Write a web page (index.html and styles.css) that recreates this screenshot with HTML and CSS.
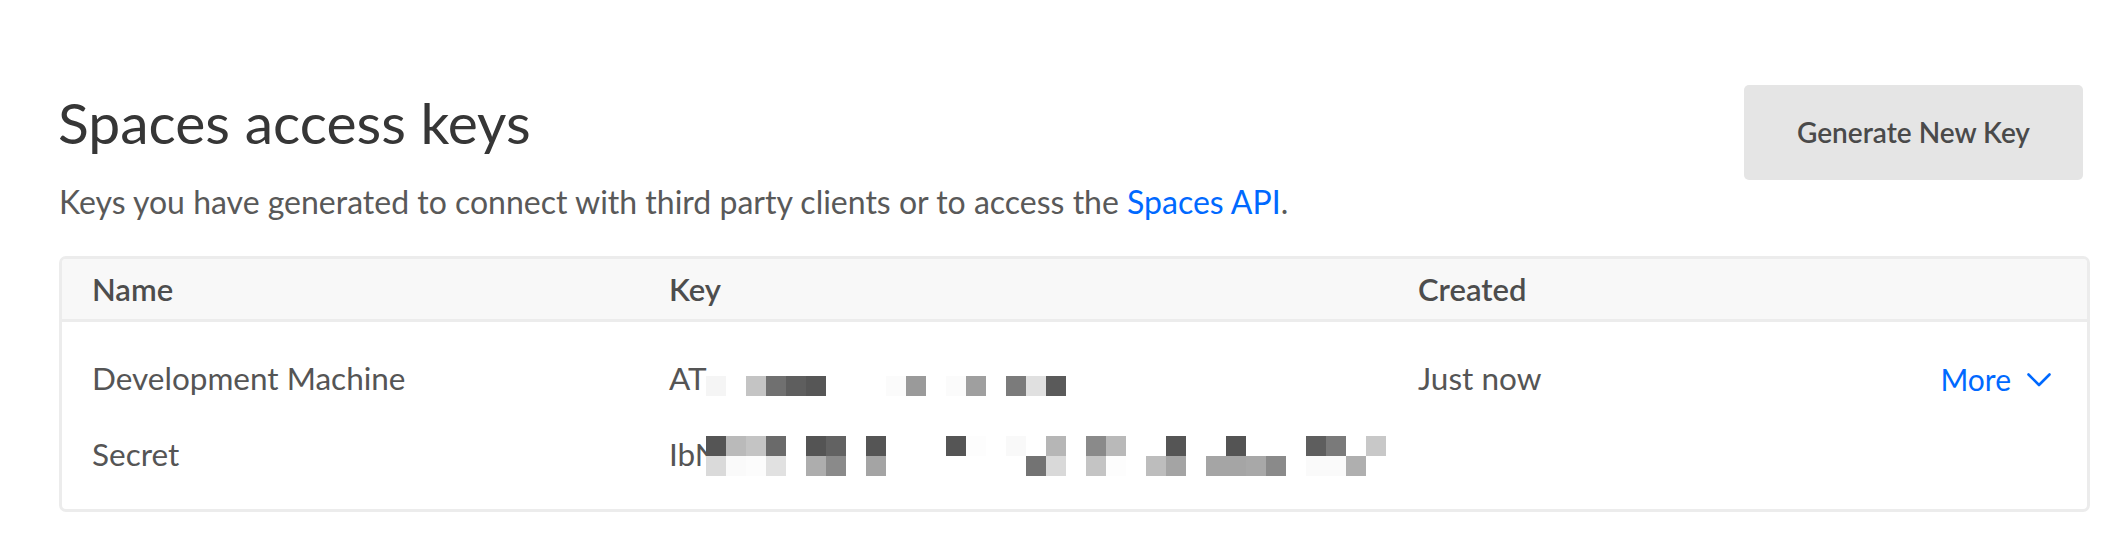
FILE: index.html
```html
<!DOCTYPE html>
<html>
<head>
<meta charset="utf-8">
<title>Spaces access keys</title>
<link rel="stylesheet" href="styles.css">
</head>
<body>
<main class="page">
  <section class="head">
    <div class="head-text">
      <h1 class="title">Spaces access keys</h1>
      <p class="subtitle">Keys you have generated to connect with third party clients or to access the <a class="link" href="#">Spaces API</a>.</p>
    </div>
    <button class="btn" type="button">Generate New Key</button>
  </section>

  <section class="table">
    <div class="thead">
      <div class="th">Name</div>
      <div class="th">Key</div>
      <div class="th">Created</div>
      <div class="th"></div>
    </div>
    <div class="tbody">
      <div class="td">Development Machine</div>
      <div class="td key">AT
        <div class="redact redact-1">
          <i style="background:#f5f5f5"></i><i></i><i style="background:#c4c4c4"></i><i style="background:#707070"></i><i style="background:#5e5e5e"></i><i style="background:#565656"></i><i></i><i></i><i></i><i style="background:#fbfbfb"></i><i style="background:#9a9a9a"></i><i></i><i style="background:#fbfbfb"></i><i style="background:#9f9f9f"></i><i></i><i style="background:#7b7b7b"></i><i style="background:#e0e0e0"></i><i style="background:#5a5a5a"></i>
        </div>
      </div>
      <div class="td">Just now</div>
      <div class="td more"><a class="more-link" href="#">More<svg class="chev" width="24" height="14" viewBox="0 0 24 14"><polyline points="1.5,1.5 12,12 22.5,1.5" fill="none" stroke="currentColor" stroke-width="2.6" stroke-linecap="round" stroke-linejoin="round"/></svg></a></div>

      <div class="td">Secret</div>
      <div class="td key">IbN
        <div class="redact redact-2">
          <i style="background:#555555"></i><i style="background:#bababa"></i><i style="background:#c4c4c4"></i><i style="background:#6a6a6a"></i><i></i><i style="background:#545454"></i><i style="background:#626262"></i><i></i><i style="background:#555555"></i><i></i><i></i><i></i><i style="background:#555555"></i><i style="background:#fdfdfd"></i><i></i><i style="background:#f9f9f9"></i><i></i><i style="background:#b6b6b6"></i><i></i><i style="background:#8a8a8a"></i><i style="background:#b9b9b9"></i><i></i><i></i><i style="background:#555555"></i><i></i><i></i><i style="background:#545454"></i><i></i><i></i><i></i><i style="background:#5e5e5e"></i><i style="background:#7a7a7a"></i><i></i><i style="background:#c8c8c8"></i>
          <i style="background:#dadada"></i><i style="background:#fafafa"></i><i style="background:#fcfcfc"></i><i style="background:#e1e1e1"></i><i></i><i style="background:#adadad"></i><i style="background:#8a8a8a"></i><i></i><i style="background:#a4a4a4"></i><i></i><i></i><i></i><i></i><i></i><i></i><i></i><i style="background:#737373"></i><i style="background:#d9d9d9"></i><i></i><i style="background:#c4c4c4"></i><i style="background:#fdfdfd"></i><i></i><i style="background:#bdbdbd"></i><i style="background:#a4a4a4"></i><i></i><i style="background:#a5a5a5"></i><i style="background:#a5a5a5"></i><i style="background:#a8a8a8"></i><i style="background:#8a8a8a"></i><i></i><i style="background:#fafafa"></i><i style="background:#fafafa"></i><i style="background:#afafaf"></i><i></i>
        </div>
      </div>
      <div class="td"></div>
      <div class="td"></div>
    </div>
  </section>
</main>
</body>
</html>
```
FILE: styles.css
```css
*{box-sizing:border-box;}
html,body{margin:0;padding:0;background:#fff;}
body{font-family:"Lato","Noto Sans",sans-serif;color:#555;line-height:1.2;}

.page{padding:85px 30px 0 59px;}

.head{display:flex;justify-content:space-between;align-items:flex-start;}
.head-text{display:flex;flex-direction:column;}
.title{margin:3px 0 0 -1px;font-size:57px;font-weight:400;color:#363636;line-height:1.2;}
.subtitle{margin:27px 0 0 0;font-size:32px;color:#595959;line-height:1.2;}
.link{color:#0069ff;text-decoration:none;}

.btn{width:339px;height:95px;margin-right:7px;border:0;border-radius:5px;background:#e5e5e5;color:#4a4a4a;font-family:inherit;font-size:28px;font-weight:600;padding:0 0 2px 0;}

.table{margin-top:34px;border:3px solid #ececec;border-radius:7px;overflow:hidden;}
.thead,.tbody{display:grid;grid-template-columns:577px 749px 1fr auto;padding:0 36px 0 30px;}
.thead{height:63px;background:#f8f8f8;border-bottom:3px solid #ececec;align-items:center;padding-top:2px;}
.th{font-size:31px;font-weight:600;color:#4d4d4d;}
.tbody{grid-template-rows:76px 76px;padding-top:19px;padding-bottom:16px;}
.td{font-size:31.5px;color:#555;display:flex;align-items:center;}
.key{position:relative;}

.redact{position:absolute;left:37px;display:grid;grid-auto-rows:20px;background:#fff;}
.redact i{display:block;width:20px;height:20px;}
.redact-1{top:35px;grid-template-columns:repeat(18,20px);}
.redact-2{top:19px;grid-template-columns:repeat(34,20px);}

.more{justify-content:flex-end;}
.more-link{display:flex;align-items:center;gap:16px;color:#0069ff;text-decoration:none;font-size:30px;}
.chev{display:block;margin-top:2px;}
```
